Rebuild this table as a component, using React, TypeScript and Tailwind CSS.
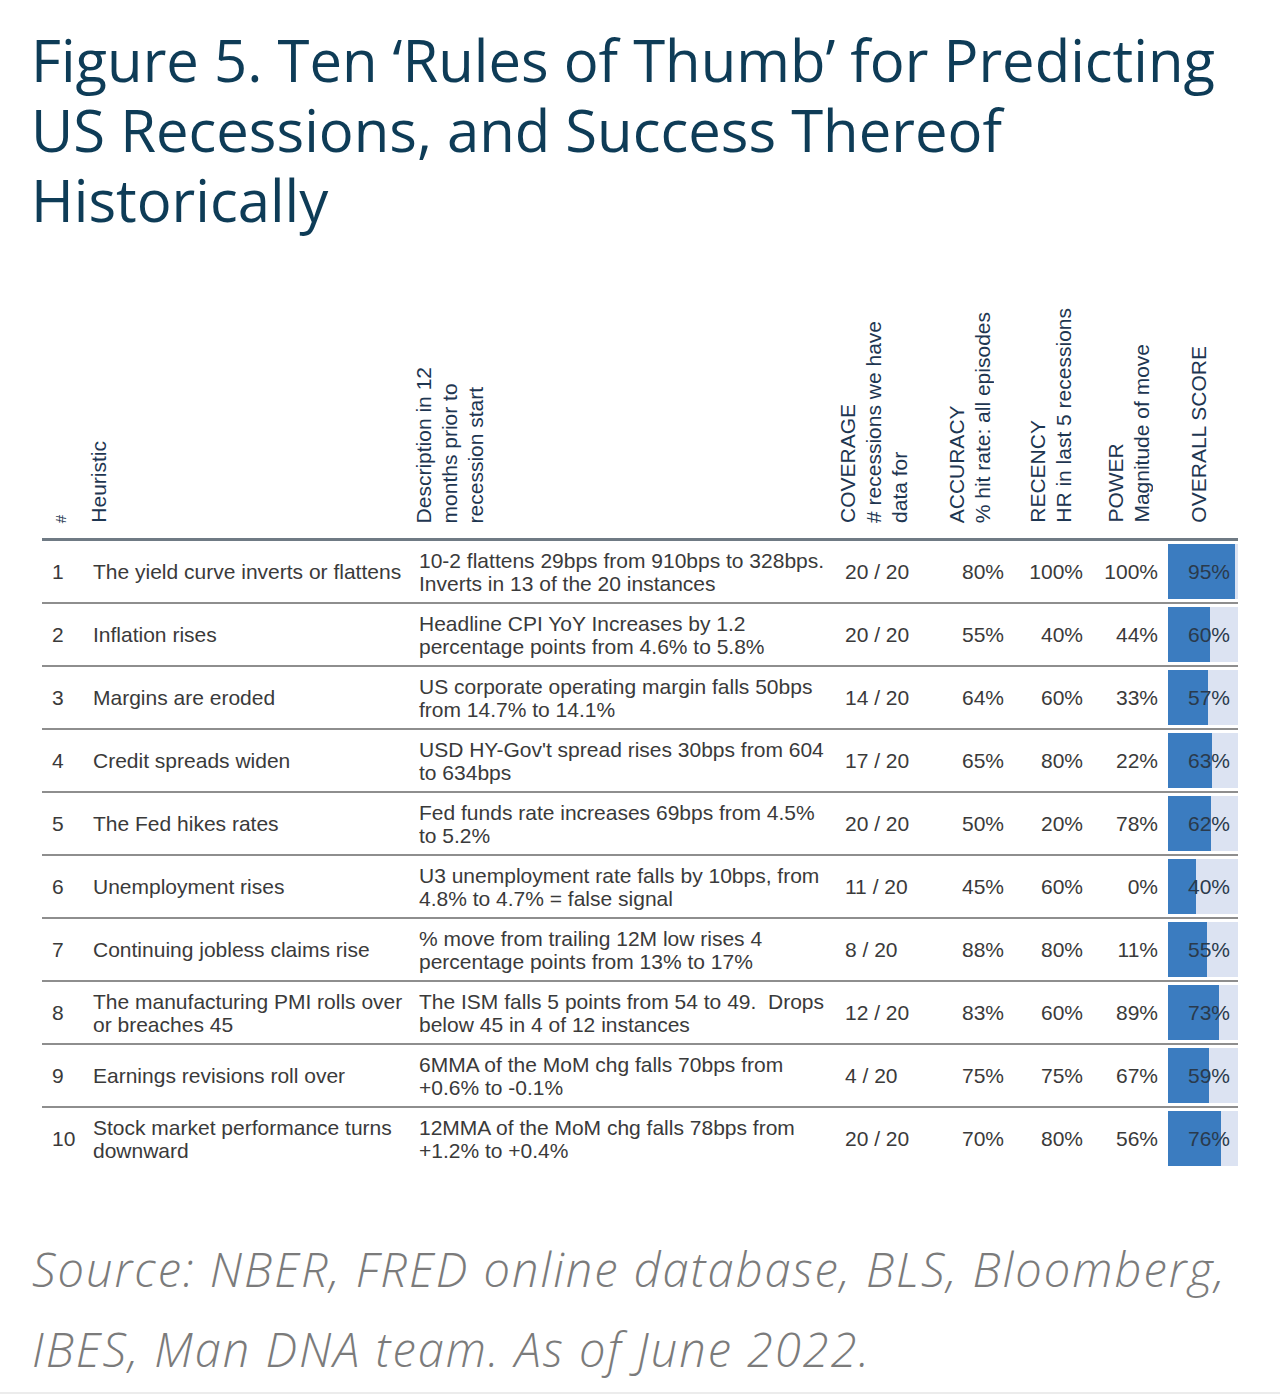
const rows = [
  { n: "1", h: ["The yield curve inverts or flattens"], d: ["10-2 flattens 29bps from 910bps to 328bps.", "Inverts in 13 of the 20 instances"], c: "20 / 20", a: "80%", r: "100%", p: "100%", s: 95 },
  { n: "2", h: ["Inflation rises"], d: ["Headline CPI YoY Increases by 1.2", "percentage points from 4.6% to 5.8%"], c: "20 / 20", a: "55%", r: "40%", p: "44%", s: 60 },
  { n: "3", h: ["Margins are eroded"], d: ["US corporate operating margin falls 50bps", "from 14.7% to 14.1%"], c: "14 / 20", a: "64%", r: "60%", p: "33%", s: 57 },
  { n: "4", h: ["Credit spreads widen"], d: ["USD HY-Gov't spread rises 30bps from 604", "to 634bps"], c: "17 / 20", a: "65%", r: "80%", p: "22%", s: 63 },
  { n: "5", h: ["The Fed hikes rates"], d: ["Fed funds rate increases 69bps from 4.5%", "to 5.2%"], c: "20 / 20", a: "50%", r: "20%", p: "78%", s: 62 },
  { n: "6", h: ["Unemployment rises"], d: ["U3 unemployment rate falls by 10bps, from", "4.8% to 4.7% = false signal"], c: "11 / 20", a: "45%", r: "60%", p: "0%", s: 40 },
  { n: "7", h: ["Continuing jobless claims rise"], d: ["% move from trailing 12M low rises 4", "percentage points from 13% to 17%"], c: "8 / 20", a: "88%", r: "80%", p: "11%", s: 55 },
  { n: "8", h: ["The manufacturing PMI rolls over", "or breaches 45"], d: ["The ISM falls 5 points from 54 to 49.  Drops", "below 45 in 4 of 12 instances"], c: "12 / 20", a: "83%", r: "60%", p: "89%", s: 73 },
  { n: "9", h: ["Earnings revisions roll over"], d: ["6MMA of the MoM chg falls 70bps from", "+0.6% to -0.1%"], c: "4 / 20", a: "75%", r: "75%", p: "67%", s: 59 },
  { n: "10", h: ["Stock market performance turns", "downward"], d: ["12MMA of the MoM chg falls 78bps from", "+1.2% to +0.4%"], c: "20 / 20", a: "70%", r: "80%", p: "56%", s: 76 },
];

const cols = "grid grid-cols-[44px_324px_425px_95px_80px_80px_78px_70px]";

function Vert({ lines, className }: { lines: string[]; className: string }) {
  return (
    <div className={`flex items-end pb-[15px] ${className}`}>
      <div className="[writing-mode:vertical-rl] rotate-180 whitespace-nowrap leading-[26px]">
        {lines.map((l, i) => (
          <span key={i}>
            {l}
            {i < lines.length - 1 ? <br /> : null}
          </span>
        ))}
      </div>
    </div>
  );
}

function Lines({ lines }: { lines: string[] }) {
  return (
    <div className="leading-[23px] whitespace-pre">
      {lines.map((l, i) => (
        <div key={i}>{l}</div>
      ))}
    </div>
  );
}

export default function App() {
  return (
    <div className="h-[1394px] w-[1280px] overflow-hidden border-b-2 border-[#ececec] bg-white">
      <h1 className="pl-[31px] pt-[25px] font-['Open_Sans',sans-serif] text-[58px] font-normal leading-[70px] text-[#0e3c57]">
        Figure 5. Ten ‘Rules of Thumb’ for Predicting
        <br />
        US Recessions, and Success Thereof
        <br />
        Historically
      </h1>

      <div className="ml-[42px] mt-[65px] w-[1196px] font-['Liberation_Sans',Arial,sans-serif] text-[21px]">
        <div className={`${cols} h-[238px] text-[#1e3651]`}>
          <Vert lines={["#"]} className="pl-[6px] text-[15px]" />
          <Vert lines={["Heuristic"]} className="pl-0" />
          <Vert lines={["Description in 12", "months prior to", "recession start"]} className="pl-[1px]" />
          <Vert lines={["COVERAGE", "# recessions we have", "data for"]} className="pl-0" />
          <Vert lines={["ACCURACY", "% hit rate: all episodes"]} className="pl-[14px]" />
          <Vert lines={["RECENCY", "HR in last 5 recessions"]} className="pl-[15px]" />
          <Vert lines={["POWER", "Magnitude of move"]} className="pl-[13px]" />
          <Vert lines={["OVERALL SCORE"]} className="pl-[18px]" />
        </div>

        <div className="border-t-[3px] border-[#6f7a84] text-[#3a3a3a]">
          {rows.map((row, i) => (
            <div
              key={row.n}
              className={`${cols} h-[61px] items-center ${i < rows.length - 1 ? "box-content border-b-2 border-[#8e8e8e]" : ""}`}
            >
              <div className="pl-[10px]">{row.n}</div>
              <div className="pl-[7px]">
                <Lines lines={row.h} />
              </div>
              <div className="pl-[9px]">
                <Lines lines={row.d} />
              </div>
              <div className="pl-[10px]">{row.c}</div>
              <div className="pr-[6px] text-right">{row.a}</div>
              <div className="pr-[7px] text-right">{row.r}</div>
              <div className="pr-[10px] text-right">{row.p}</div>
              <div className="h-full py-[3px]">
                <div className="relative h-full bg-[#dce3f2]">
                  <div className="absolute inset-y-0 left-0 bg-[#3b7cc0]" style={{ width: `${row.s}%` }} />
                  <div className="relative flex h-full items-center justify-end pr-[8px] text-[#2a3a4c]">{row.s}%</div>
                </div>
              </div>
            </div>
          ))}
        </div>
      </div>

      <p className="mt-[60px] pl-[32px] font-['Open_Sans',sans-serif] text-[47px] font-light italic leading-[80px] tracking-[2px] text-[#7b7b7b]">
        Source: NBER, FRED online database, BLS, Bloomberg,
        <br />
        IBES, Man DNA team. As of June 2022.
      </p>
    </div>
  );
}
